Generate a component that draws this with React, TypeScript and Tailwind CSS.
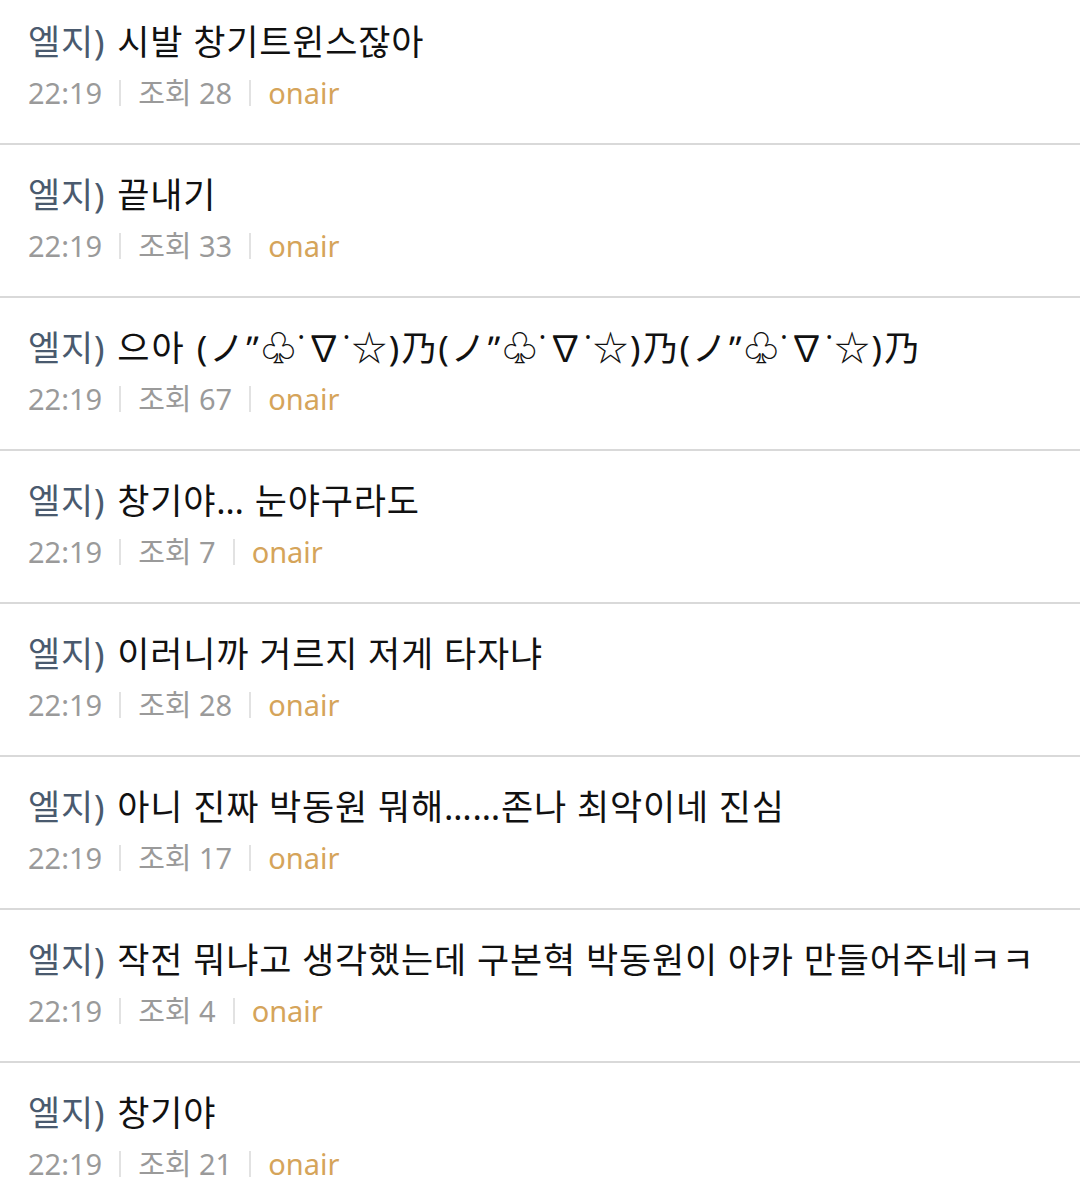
import React from "react";

const rows = [
  { t: "시발 창기트윈스잖아", v: 28 },
  { t: "끝내기", v: 33 },
  { t: "으아 (ノ\u02BA♧˙∇˙☆)乃(ノ\u02BA♧˙∇˙☆)乃(ノ\u02BA♧˙∇˙☆)乃", v: 67, wide: true },
  { t: "창기야… 눈야구라도", v: 7 },
  { t: "이러니까 거르지 저게 타자냐", v: 28 },
  { t: "아니 진짜 박동원 뭐해……존나 최악이네 진심", v: 17 },
  { t: "작전 뭐냐고 생각했는데 구본혁 박동원이 아카 만들어주네ㅋㅋ", v: 4 },
  { t: "창기야", v: 21 },
];

export default function App() {
  return (
    <div
      className="w-[1080px] h-[1203px] overflow-hidden bg-white"
      style={{ fontFamily: '"Noto Sans", "Noto Sans CJK KR", sans-serif' }}
    >
      <div className="-mt-[8px]">
        {rows.map((r, i) => (
          <div key={i} className="border-b-2 border-[#d9d9d9] pl-[28px] pt-[26px] pb-[30px]">
            <div className="h-[48px] flex items-center text-[35px] leading-[48px] tracking-[0.8px] text-[#111] whitespace-nowrap">
              <span className="text-[#4a5a6e]">엘지)</span>
              <span className={r.wide ? "ml-[12px] tracking-[2px]" : "ml-[12px]"}>{r.t}</span>
            </div>
            <div className="mt-[7px] h-[40px] flex items-center text-[29px] leading-[40px] text-[#9a9a9a]">
              <span>22:19</span>
              <span className="mx-[17px] w-[2px] h-[26px] bg-[#e2e2e2]" />
              <span>조회 {r.v}</span>
              <span className="mx-[17px] w-[2px] h-[26px] bg-[#e2e2e2]" />
              <span className="text-[#d5a45a]">onair</span>
            </div>
          </div>
        ))}
      </div>
    </div>
  );
}
